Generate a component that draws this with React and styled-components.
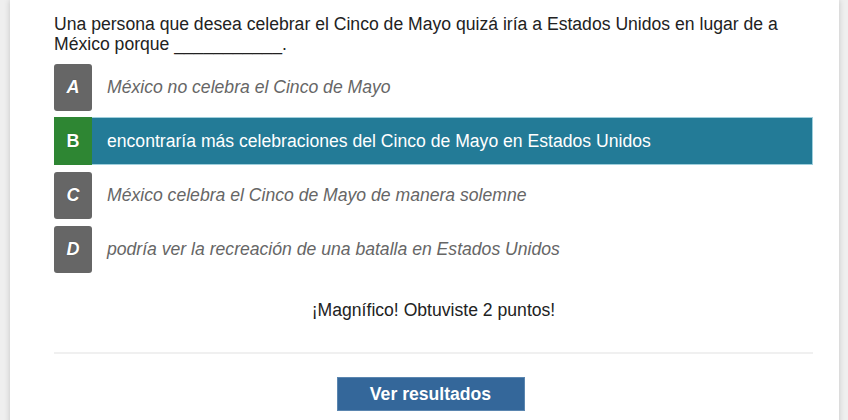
import React from 'react'
import styled, { createGlobalStyle } from 'styled-components'

const GlobalStyle = createGlobalStyle`
	html, body {
		margin: 0;
		padding: 0;
		background: #efefef;
		font-family: 'Liberation Sans', Arial, sans-serif;
	}
`

const Page = styled.div`
	padding: 0 9px 0 10px;
	height: 420px;
	overflow: hidden;
`

const Card = styled.div`
	background: #fff;
	box-shadow: 0 0 6px rgba(0, 0, 0, 0.18);
	padding: 14px 26px 40px 44px;
	min-height: 420px;
	box-sizing: border-box;
`

const Question = styled.p`
	margin: 0 0 9px;
	font-size: 17.6px;
	line-height: 20px;
	color: #222;
`

const Options = styled.div`
	display: flex;
	flex-direction: column;
	gap: 6px;
`

const Option = styled.div`
	display: flex;
	align-items: center;
	height: 48px;
	box-sizing: border-box;
	background: ${p => (p.$selected ? '#237b97' : 'transparent')};
	border: 1px solid ${p => (p.$selected ? '#9fcfdc' : 'transparent')};
	border-left: 0;
`

const Letter = styled.div`
	width: 38px;
	height: ${p => (p.$selected ? '48px' : '47px')};
	margin-top: ${p => (p.$selected ? '-1px' : '0')};
	margin-bottom: ${p => (p.$selected ? '-1px' : '0')};
	flex: none;
	display: flex;
	align-items: center;
	justify-content: center;
	border-radius: ${p => (p.$selected ? '0' : '3px')};
	background: ${p => (p.$selected ? '#2e8633' : '#666666')};
	color: #fff;
	font-weight: bold;
	font-style: ${p => (p.$selected ? 'normal' : 'italic')};
	font-size: 18px;
	text-shadow: 0 0 1px rgba(0, 0, 0, 0.4);
`

const OptionText = styled.span`
	margin-left: 15px;
	font-size: 17.6px;
	color: ${p => (p.$selected ? '#fff' : '#666')};
	font-style: ${p => (p.$selected ? 'normal' : 'italic')};
`

const Feedback = styled.div`
	text-align: center;
	font-size: 17.6px;
	color: #222;
	margin-top: 27px;
`

const Divider = styled.hr`
	border: 0;
	border-top: 2px solid #f0f0f0;
	margin: 31px 0 0;
`

const Actions = styled.div`
	display: flex;
	justify-content: center;
	padding-top: 23px;
	padding-right: 6px;
`

const Button = styled.button`
	width: 188px;
	height: 34px;
	background: #34679a;
	border: 1px solid #5b86b0;
	color: #fff;
	font-family: 'Liberation Sans', Arial, sans-serif;
	font-weight: bold;
	font-size: 17.6px;
	cursor: pointer;
`

const options = [
	{ key: 'A', text: 'México no celebra el Cinco de Mayo' },
	{ key: 'B', text: 'encontraría más celebraciones del Cinco de Mayo en Estados Unidos', selected: true },
	{ key: 'C', text: 'México celebra el Cinco de Mayo de manera solemne' },
	{ key: 'D', text: 'podría ver la recreación de una batalla en Estados Unidos' },
]

const App = () => {
	return (
		<>
			<GlobalStyle />
			<Page>
				<Card>
					<Question>
						Una persona que desea celebrar el Cinco de Mayo quizá iría a Estados Unidos en lugar de a México
						porque ___________.
					</Question>
					<Options>
						{options.map(o => (
							<Option key={o.key} $selected={o.selected}>
								<Letter $selected={o.selected}>{o.key}</Letter>
								<OptionText $selected={o.selected}>{o.text}</OptionText>
							</Option>
						))}
					</Options>
					<Feedback>¡Magnífico! Obtuviste 2 puntos!</Feedback>
					<Divider />
					<Actions>
						<Button>Ver resultados</Button>
					</Actions>
				</Card>
			</Page>
		</>
	)
}

export default App
